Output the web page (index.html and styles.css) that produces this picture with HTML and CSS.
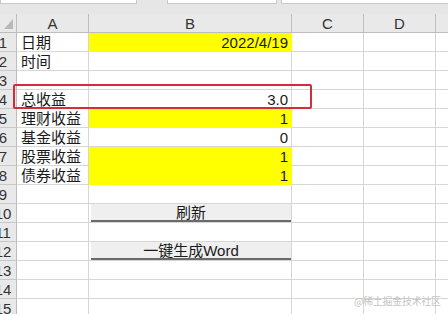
FILE: index.html
```html
<!DOCTYPE html>
<html lang="zh-CN">
<head>
  <meta charset="UTF-8" />
  <title>Sheet1</title>
  <link rel="stylesheet" href="styles.css">
</head>
<body>

<div class="toolbar">
  <div class="box box-name"></div>
  <div class="box box-mid"></div>
  <div class="box box-formula"></div>
</div>

<div class="sheet">
  <div class="grid">
    <div class="cell head corner"><span class="tri"></span></div>
    <div class="cell head">A</div>
    <div class="cell head">B</div>
    <div class="cell head">C</div>
    <div class="cell head">D</div>
    <div class="cell head"></div>

    <div class="cell num">1</div>
    <div class="cell">日期</div>
    <div class="cell right fill">2022/4/19</div>
    <div class="cell"></div><div class="cell"></div><div class="cell"></div>

    <div class="cell num">2</div>
    <div class="cell">时间</div>
    <div class="cell"></div>
    <div class="cell"></div><div class="cell"></div><div class="cell"></div>

    <div class="cell num">3</div>
    <div class="cell"></div>
    <div class="cell"></div>
    <div class="cell"></div><div class="cell"></div><div class="cell"></div>

    <div class="cell num">4</div>
    <div class="cell">总收益</div>
    <div class="cell right">3.0</div>
    <div class="cell"></div><div class="cell"></div><div class="cell"></div>

    <div class="cell num">5</div>
    <div class="cell">理财收益</div>
    <div class="cell right fill">1</div>
    <div class="cell"></div><div class="cell"></div><div class="cell"></div>

    <div class="cell num">6</div>
    <div class="cell">基金收益</div>
    <div class="cell right">0</div>
    <div class="cell"></div><div class="cell"></div><div class="cell"></div>

    <div class="cell num">7</div>
    <div class="cell">股票收益</div>
    <div class="cell right fill">1</div>
    <div class="cell"></div><div class="cell"></div><div class="cell"></div>

    <div class="cell num">8</div>
    <div class="cell">债券收益</div>
    <div class="cell right fill">1</div>
    <div class="cell"></div><div class="cell"></div><div class="cell"></div>

    <div class="cell num">9</div>
    <div class="cell"></div>
    <div class="cell"></div>
    <div class="cell"></div><div class="cell"></div><div class="cell"></div>

    <div class="cell num">10</div>
    <div class="cell"></div>
    <div class="cell btn-cell"><button class="sheet-btn">刷新</button></div>
    <div class="cell"></div><div class="cell"></div><div class="cell"></div>

    <div class="cell num">11</div>
    <div class="cell"></div>
    <div class="cell"></div>
    <div class="cell"></div><div class="cell"></div><div class="cell"></div>

    <div class="cell num">12</div>
    <div class="cell"></div>
    <div class="cell btn-cell"><button class="sheet-btn">一键生成Word</button></div>
    <div class="cell"></div><div class="cell"></div><div class="cell"></div>

    <div class="cell num">13</div>
    <div class="cell"></div>
    <div class="cell"></div>
    <div class="cell"></div><div class="cell"></div><div class="cell"></div>

    <div class="cell num">14</div>
    <div class="cell"></div>
    <div class="cell"></div>
    <div class="cell"></div><div class="cell"></div><div class="cell"></div>

    <div class="cell num">15</div>
    <div class="cell"></div>
    <div class="cell"></div>
    <div class="cell"></div><div class="cell"></div><div class="cell"></div>
  </div>

  <div class="highlight"></div>
  <div class="watermark">@稀土掘金技术社区</div>
</div>

</body>
</html>
```

FILE: styles.css
```css
* { box-sizing: border-box; }

body {
  margin: 0;
  width: 448px;
  height: 314px;
  overflow: hidden;
  background: #fff;
  font-family: "Liberation Sans", "Noto Sans CJK SC", sans-serif;
  font-size: 15px;
  color: #1a1a1a;
}

.toolbar {
  height: 14px;
  background: #e6e6e6;
  display: flex;
  align-items: flex-start;
}

.box {
  height: 4px;
  background: #fff;
  border: 1px solid #c8c8c8;
  border-top: none;
}
.box-name { width: 137px; }
.box-mid { width: 110px; margin-left: 30px; }
.box-formula { flex: 1; margin-left: 4px; border-right: none; }

.sheet {
  position: relative;
}

.grid {
  display: grid;
  grid-template-columns: 27px 72px 203px 72px 72px 40px;
  grid-auto-rows: 19px;
  margin-left: -10px;
}

.cell {
  border-right: 1px solid #d6d6d6;
  border-bottom: 1px solid #d6d6d6;
  line-height: 18px;
  padding: 1px 4px 0;
  white-space: nowrap;
  overflow: hidden;
}

.head {
  height: 19px;
  background: #e9e9e9;
  border-right-color: #bdbdbd;
  border-bottom-color: #bdbdbd;
  text-align: center;
  color: #333;
}

.corner { position: relative; }
.tri {
  position: absolute;
  right: 3px;
  bottom: 3px;
  width: 0;
  height: 0;
  border-left: 9px solid transparent;
  border-bottom: 10px solid #b9b9b9;
}

.num {
  background: #e9e9e9;
  border-right-color: #bdbdbd;
  border-bottom-color: #c8c8c8;
  text-align: center;
  padding: 1px 0 0;
  color: #333;
}

.right { text-align: right; padding-right: 3px; }

.fill {
  background: #ffff00;
  border-color: #ffff00;
}

.btn-cell { padding: 0 0 0 2px; }

.sheet-btn {
  display: block;
  width: 201px;
  height: 18px;
  margin: 0;
  padding: 0;
  background: #efefef;
  border: none;
  border-bottom: 2px solid #6a6a6a;
  border-right: 1px solid #6a6a6a;
  font-family: "Liberation Sans", "Noto Sans CJK SC", sans-serif;
  font-size: 15px;
  line-height: 17px;
  color: #1a1a1a;
  text-align: center;
}

.highlight {
  position: absolute;
  left: 13px;
  top: 70px;
  width: 299px;
  height: 25px;
  border: 2px solid #d42c3a;
  border-radius: 2px;
}

.watermark {
  position: absolute;
  left: 354px;
  top: 279px;
  font-size: 10px;
  letter-spacing: -0.3px;
  white-space: nowrap;
  font-family: "Noto Sans CJK SC", sans-serif;
  color: #c4c4c4;
}
```
